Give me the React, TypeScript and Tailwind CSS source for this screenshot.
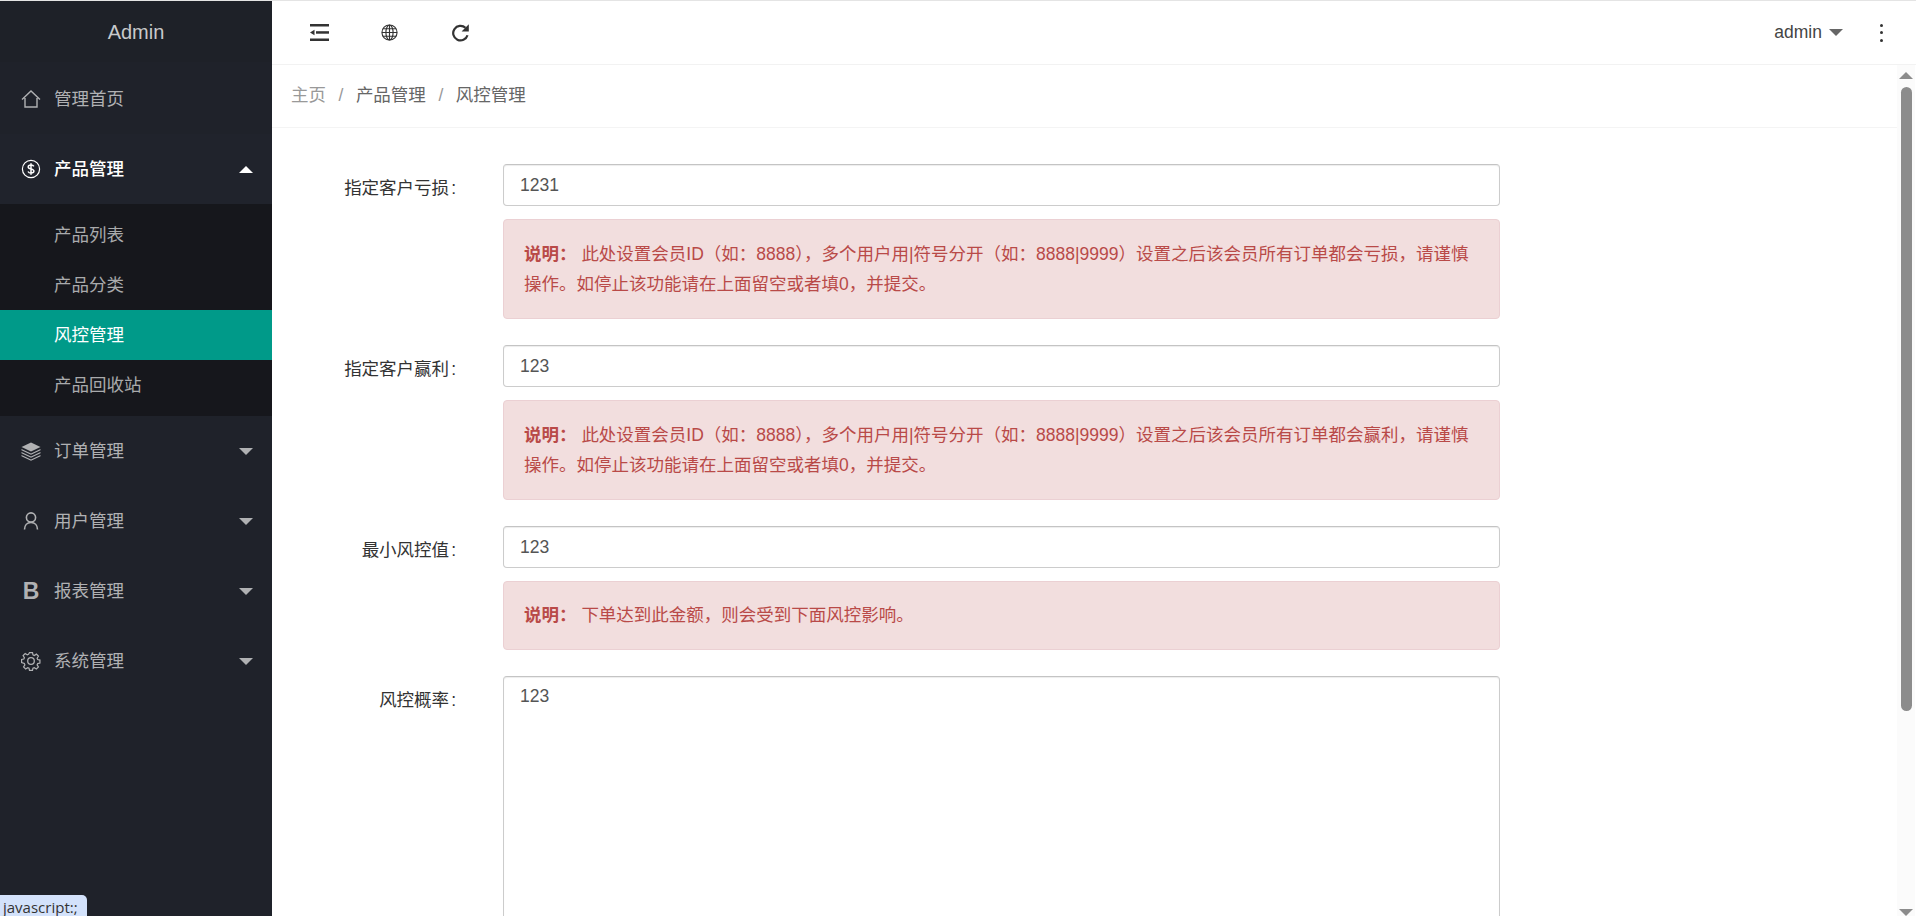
import React from 'react';

const font = "font-['Liberation_Sans','Noto_Sans_CJK_SC',sans-serif]";

const HomeIcon = () => (
  <svg width="20" height="20" viewBox="0 0 20 20" fill="none" stroke="currentColor" strokeWidth="1.4">
    <path d="M1 10.500 10 2l9 8.500M4 9v9h12V9" />
  </svg>
);
const DollarIcon = () => (
  <svg width="20" height="20" viewBox="0 0 20 20" fill="none" stroke="currentColor" strokeWidth="1.2">
    <circle cx="10" cy="10" r="8.600" />
    <path strokeWidth="1.500" d="M12.800 7.400c-.4-1-1.500-1.500-2.800-1.500-1.600 0-2.800.8-2.800 2 0 2.800 5.700 1.400 5.700 4.200 0 1.200-1.300 2-2.900 2-1.400 0-2.500-.6-3-1.600M10 4.200v11.600" />
  </svg>
);
const LayersIcon = () => (
  <svg width="20" height="20" viewBox="0 0 20 20" fill="currentColor">
    <path d="M10 1.500 19.500 6 10 10.500.5 6z" />
    <path d="M.5 8 10 12.500 19.500 8v1.300L10 13.800.5 9.300z" />
    <path d="M.5 11 10 15.500l9.500-4.500v1.300L10 16.800.5 12.300z" />
    <path d="M.5 14 10 18.500l9.500-4.500v1.300L10 19.800.5 15.300z" />
  </svg>
);
const UserIcon = () => (
  <svg width="20" height="20" viewBox="0 0 20 20" fill="none" stroke="currentColor" strokeWidth="1.600">
    <circle cx="10" cy="6.500" r="4.600" />
    <path d="M3.500 18.500c0-4 2.500-7 6.500-7s6.500 3 6.500 7" />
  </svg>
);
const GearIcon = () => (
  <svg width="20" height="20" viewBox="0 0 20 20" fill="none" stroke="currentColor" strokeWidth="1.300">
    <circle cx="10" cy="10" r="3.300" />
    <path d="M8.400 1h3.200l.5 2.500 1.400.6 2.200-1.400 2.200 2.200-1.400 2.200.6 1.400 2.400.5v3.200l-2.400.5-.6 1.400 1.400 2.200-2.200 2.200-2.200-1.400-1.400.6-.5 2.300H8.400l-.5-2.300-1.400-.6-2.200 1.400-2.200-2.200 1.400-2.200-.6-1.400L0 11.600V8.400l2.400-.5.6-1.400-1.400-2.200 2.200-2.200 2.200 1.400 1.400-.6z" transform="translate(.6 .6) scale(.94)" />
  </svg>
);
const IndentIcon = () => (
  <svg width="19" height="17" viewBox="0 0 19 17" fill="currentColor">
    <rect x="0" y="0" width="19" height="2.500" />
    <rect x="6" y="7.200" width="13" height="2.500" />
    <rect x="0" y="14.500" width="19" height="2.500" />
    <path d="M0 8.500l4.500-2.700v5.400z" />
  </svg>
);
const GlobeIcon = () => (
  <svg width="17" height="17" viewBox="0 0 18 18" fill="none" stroke="currentColor" strokeWidth="1.200">
    <circle cx="9" cy="9" r="8" />
    <ellipse cx="9" cy="9" rx="3.800" ry="8" />
    <path d="M9 1v16M1 9h16M2 5h14M2 13h14" />
  </svg>
);
const RefreshIcon = () => (
  <svg width="18" height="18" viewBox="0 0 18 18" fill="none" stroke="currentColor" strokeWidth="2.200">
    <path d="M16.500 11.200A7.300 7.300 0 1 1 14.500 3.800" />
    <path d="M17.800 .3V7.500H10.600z" fill="currentColor" stroke="none" />
  </svg>
);

const Caret = ({ up, className }: { up?: boolean; className: string }) => (
  <span className={`w-0 h-0 border-x-[7px] border-x-transparent ${up ? 'border-b-[7px]' : 'border-t-[7px]'} ${className}`} />
);

const NavItem = ({ icon, label, caret, open }: { icon: React.ReactNode; label: string; caret?: boolean; open?: boolean }) => (
  <div className={`h-[70px] flex items-center pl-[21px] pr-[19px] ${open ? 'bg-[#20232c] text-white font-medium' : 'text-[#b0b1b3]'}`}>
    <span className="w-[20px] h-[20px] flex items-center justify-center">{icon}</span>
    <span className="ml-[13px] flex-1">{label}</span>
    {caret && <Caret up={open} className={open ? 'border-b-white' : 'border-t-[#b0b1b3]'} />}
  </div>
);

const SubItem = ({ label, active }: { label: string; active?: boolean }) => (
  <div className={`h-[50px] flex items-center pl-[54px] ${active ? 'bg-[#009a89] text-white' : 'text-[#a9aaac]'}`}>{label}</div>
);

const Sidebar = () => (
  <aside className="w-[272px] shrink-0 bg-[#1f222a] flex flex-col">
    <div className="h-[61px] shrink-0 bg-[#1e2128] flex items-center justify-center text-[#c8c9cb] text-[20px]">Admin</div>
    <div className="h-[2px] shrink-0" />
    <NavItem icon={<HomeIcon />} label="管理首页" />
    <NavItem icon={<DollarIcon />} label="产品管理" caret open />
    <div className="bg-[#16171c] py-[6px]">
      <SubItem label="产品列表" />
      <SubItem label="产品分类" />
      <SubItem label="风控管理" active />
      <SubItem label="产品回收站" />
    </div>
    <NavItem icon={<LayersIcon />} label="订单管理" caret />
    <NavItem icon={<UserIcon />} label="用户管理" caret />
    <NavItem icon={<span className="font-bold text-[23px] leading-none font-['Liberation_Sans']">B</span>} label="报表管理" caret />
    <NavItem icon={<GearIcon />} label="系统管理" caret />
  </aside>
);

const Label = ({ text }: { text: string }) => (
  <label className="w-[183px] pr-[47px] pt-[11px] text-right text-[#333] whitespace-nowrap">
    {text}
    <span className="ml-[2px]">:</span>
  </label>
);

const Field = ({ label, value, note, last }: { label: string; value: string; note: string; last?: boolean }) => (
  <div className="flex mb-[26.5px]">
    <Label text={label} />
    <div>
      <div className="w-[997px] h-[42px] border border-[#ccc] border-t-[#c4c4c4] rounded-[4px] px-[16px] flex items-center text-[#555] shadow-[inset_0_1px_1px_rgba(0,0,0,0.075)]">{value}</div>
      <div className={`mt-[12.5px] w-[997px] bg-[#f2dede] border border-[#ebd0d3] rounded-[4px] px-[20px] text-[#b94a48] leading-[30px] ${last ? 'py-[18.5px]' : 'py-[19px]'}`}>
        <b>说明：</b> {note}
      </div>
    </div>
  </div>
);

export default function App() {
  return (
    <div className={`h-screen overflow-hidden flex border-t border-t-[#e4e4e4] text-[17.5px] relative ${font}`}>
      <Sidebar />
      <div className="flex-1 min-w-0 flex flex-col">
        <header className="h-[64px] shrink-0 border-b border-b-[#f2f2f2] flex items-center text-[#333]">
          <span className="ml-[38px]"><IndentIcon /></span>
          <span className="ml-[52px]"><GlobeIcon /></span>
          <span className="ml-[53px]"><RefreshIcon /></span>
          <span className="ml-auto text-[#444]">admin</span>
          <Caret className="ml-[7px] border-t-[#666]" />
          <span className="ml-[37px] mr-[33px] flex flex-col gap-[4.5px]">
            <span className="w-[3px] h-[3px] bg-[#333] rounded-full" />
            <span className="w-[3px] h-[3px] bg-[#333] rounded-full" />
            <span className="w-[3px] h-[3px] bg-[#333] rounded-full" />
          </span>
        </header>
        <div className="flex-1 flex min-h-0">
          <main className="flex-1 min-w-0">
            <div className="h-[63px] border-b border-b-[#f4f4f4] flex items-center pl-[19px] pb-[2px] text-[#666]">
              <span className="text-[#999]">主页</span>
              <span className="mx-[12.5px] text-[#999]">/</span>
              <span>产品管理</span>
              <span className="mx-[12.5px] text-[#999]">/</span>
              <span>风控管理</span>
            </div>
            <div className="pt-[36px] pl-[48px]">
              <Field label="指定客户亏损" value="1231" note="此处设置会员ID（如：8888），多个用户用|符号分开（如：8888|9999）设置之后该会员所有订单都会亏损，请谨慎操作。如停止该功能请在上面留空或者填0，并提交。" />
              <Field label="指定客户赢利" value="123" note="此处设置会员ID（如：8888），多个用户用|符号分开（如：8888|9999）设置之后该会员所有订单都会赢利，请谨慎操作。如停止该功能请在上面留空或者填0，并提交。" />
              <Field label="最小风控值" value="123" note="下单达到此金额，则会受到下面风控影响。" last />
              <div className="flex">
                <Label text="风控概率" />
                <div className="w-[997px] h-[400px] border border-[#ccc] border-t-[#c4c4c4] rounded-[4px] px-[16px] pt-[6px] text-[#555] shadow-[inset_0_1px_1px_rgba(0,0,0,0.075)]">123</div>
              </div>
            </div>
          </main>
          <div className="w-[18px] mr-[1px] bg-[#fbfbfb] flex flex-col items-center">
            <Caret up className="mt-[7px] border-b-[#8c8c8c]" />
            <div className="mt-[8px] w-[11px] h-[624px] rounded-full bg-[#8c8c8c]" />
            <Caret className="mt-auto border-t-[#8c8c8c]" />
          </div>
        </div>
      </div>
      <div className="absolute left-0 bottom-0 h-[21px] w-[87px] bg-[#d3e2fb] rounded-tr-[5px] pl-[3px] text-[15px] leading-[25px] text-[#333] font-['Open_Sans',sans-serif] overflow-hidden">javascript:;</div>
    </div>
  );
}
